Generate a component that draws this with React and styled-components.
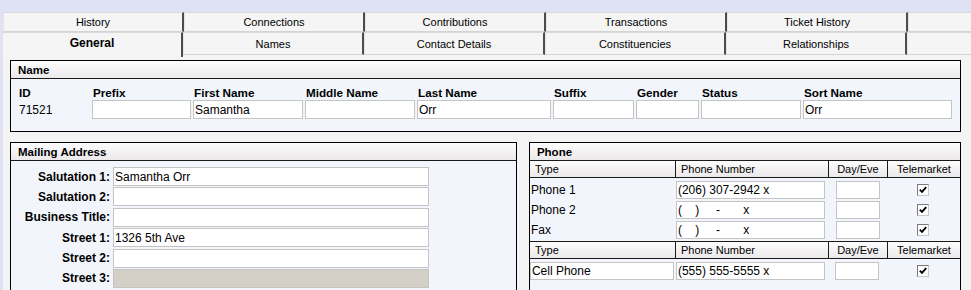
import React from "react";
import styled, { createGlobalStyle } from "styled-components";

const GlobalStyle = createGlobalStyle`
  html, body {
    margin: 0;
    padding: 0;
    background: #dee2f4;
    font-family: "Liberation Sans", Arial, sans-serif;
    font-size: 11px;
    color: #000;
  }
`;

const topTabs = ["History", "Connections", "Contributions", "Transactions", "Ticket History"];
const bottomTabs = ["General", "Names", "Contact Details", "Constituencies", "Relationships"];

const nameFields = [
    { label: "ID", width: 74, value: "71521", plain: true },
    { label: "Prefix", width: 101, value: "" },
    { label: "First Name", width: 112, value: "Samantha" },
    { label: "Middle Name", width: 112, value: "" },
    { label: "Last Name", width: 136, value: "Orr" },
    { label: "Suffix", width: 83, value: "" },
    { label: "Gender", width: 65, value: "" },
    { label: "Status", width: 102, value: "" },
    { label: "Sort Name", width: 151, value: "Orr" },
];

const addressRows = [
    { label: "Salutation 1:", value: "Samantha Orr" },
    { label: "Salutation 2:", value: "" },
    { label: "Business Title:", value: "" },
    { label: "Street 1:", value: "1326 5th Ave" },
    { label: "Street 2:", value: "" },
    { label: "Street 3:", value: "", disabled: true },
];

const sp = (n) => "\u00a0".repeat(n);
const blankNumber = "(" + sp(4) + ")" + sp(5) + "-" + sp(7) + "x";

const phoneRows = [
    { type: "Phone 1", number: "(206) 307-2942 x" },
    { type: "Phone 2", number: blankNumber },
    { type: "Fax", number: blankNumber },
];

const CheckBox = () => (
    <Check>
        <svg width="8" height="8" viewBox="0 0 8 8">
            <path d="M0.8 3.6 L3 5.8 L7.2 1.2" fill="none" stroke="#000" strokeWidth="1.9" />
        </svg>
    </Check>
);

const PhoneHeader = () => (
    <PhoneGrid $head>
        <HeadCell>Type</HeadCell>
        <HeadCell>Phone Number</HeadCell>
        <HeadCell $center>Day/Eve</HeadCell>
        <HeadCell $center $last>Telemarket</HeadCell>
    </PhoneGrid>
);

const App = () => {
    return (
        <>
            <GlobalStyle />
            <Page>
                <TabRow $top>
                    {topTabs.map((t) => (
                        <Tab key={t}>{t}</Tab>
                    ))}
                    <Tab $filler />
                </TabRow>
                <TabRow>
                    {bottomTabs.map((t, i) => (
                        <Tab key={t} $active={i === 0}>
                            {t}
                        </Tab>
                    ))}
                    <Tab $filler />
                </TabRow>
                <Content>
                    <Panel>
                        <PanelHeader>Name</PanelHeader>
                        <NameBody>
                            {nameFields.map((f) => (
                                <NameCol key={f.label} style={{ width: f.width }}>
                                    <FieldLabel>{f.label}</FieldLabel>
                                    {f.plain ? <PlainValue>{f.value}</PlainValue> : <Input>{f.value}</Input>}
                                </NameCol>
                            ))}
                        </NameBody>
                    </Panel>
                    <Columns>
                        <Panel $width={508}>
                            <PanelHeader>Mailing Address</PanelHeader>
                            <AddressBody>
                                {addressRows.map((r) => (
                                    <AddressRow key={r.label}>
                                        <RowLabel>{r.label}</RowLabel>
                                        <Input $w={316} $h={19} $disabled={r.disabled}>
                                            {r.value}
                                        </Input>
                                    </AddressRow>
                                ))}
                            </AddressBody>
                        </Panel>
                        <Panel $width={433}>
                            <PanelHeader>Phone</PanelHeader>
                            <PhoneHeader />
                            <PhoneRows>
                                {phoneRows.map((r) => (
                                    <PhoneGrid key={r.type}>
                                        <TypeText>{r.type}</TypeText>
                                        <Input $w={149} $h={18}>{r.number}</Input>
                                        <DayEve />
                                        <CheckCell>
                                            <CheckBox />
                                        </CheckCell>
                                    </PhoneGrid>
                                ))}
                            </PhoneRows>
                            <PhoneHeader />
                            <PhoneRows $last>
                                <PhoneGrid>
                                    <Input $w={144} $h={18}>Cell Phone</Input>
                                    <Input $w={149} $h={18}>(555) 555-5555 x</Input>
                                    <DayEve $shift />
                                    <CheckCell>
                                        <CheckBox />
                                    </CheckCell>
                                </PhoneGrid>
                            </PhoneRows>
                        </Panel>
                    </Columns>
                </Content>
            </Page>
        </>
    );
};

export default App;

const Page = styled.div`
    width: 971px;
    height: 290px;
    overflow: hidden;
    padding-top: 12px;
    box-sizing: border-box;
    background: #dee2f4;
`;

const TabRow = styled.div`
    display: flex;
    height: ${(p) => (p.$top ? "20px" : "23px")};
    padding-left: ${(p) => (p.$top ? "3px" : "2px")};
    background: #dee2f4;
`;

const Tab = styled.div`
    flex: ${(p) => (p.$filler ? "1" : "0 0 181px")};
    box-sizing: border-box;
    display: flex;
    align-items: center;
    justify-content: center;
    background: #f5f5f5;
    border-top: 1px solid #d9d9d9;
    border-bottom: ${(p) => (p.$active ? "none" : "1px solid #d4d4d4")};
    border-right: ${(p) => (p.$filler ? "none" : "2px solid #4d4d4d")};
    border-left: 1px solid #e4e4e4;
    font-weight: ${(p) => (p.$active ? "bold" : "normal")};
    font-size: ${(p) => (p.$active ? "12px" : "11px")};
    padding-bottom: ${(p) => (p.$active ? "4px" : "0")};
    ${(p) => (p.$active ? "height: 25px;" : "")}
`;

const Content = styled.div`
    margin-left: 3px;
    background: #f4f4f4;
    height: 300px;
    padding: 5px 10px 0 7px;
    box-sizing: border-box;
`;

const Panel = styled.div`
    border: 1px solid #000;
    width: ${(p) => (p.$width ? p.$width + "px" : "auto")};
    box-sizing: border-box;
    background: #f2f6fc;
    display: flex;
    flex-direction: column;
    ${(p) => (p.$width ? "height: 160px;" : "")}
`;

const PanelHeader = styled.div`
    height: 18px;
    box-sizing: border-box;
    padding: 3px 7px 0;
    font-weight: bold;
    font-size: 11.5px;
    background: linear-gradient(#fdfdfd, #ebe8ea);
    border-bottom: 1px solid #1a1a1a;
`;

const NameBody = styled.div`
    display: flex;
    padding: 7px 0 12px 7px;
`;

const NameCol = styled.div`
    display: flex;
    flex-direction: column;
    flex: none;
`;

const FieldLabel = styled.div`
    font-weight: bold;
    font-size: 11.7px;
    height: 13px;
    padding-left: 1px;
    margin-bottom: 1px;
    white-space: nowrap;
`;

const PlainValue = styled.div`
    height: 19px;
    display: flex;
    align-items: center;
    padding-left: 1px;
    font-size: 12px;
`;

const Input = styled.div`
    box-sizing: border-box;
    width: ${(p) => (p.$w ? p.$w + "px" : "calc(100% - 2px)")};
    height: ${(p) => (p.$h || 19) + "px"};
    border: 1px solid #c4c4c4;
    background: ${(p) => (p.$disabled ? "#d4d0c8" : "#fff")};
    padding-left: 1px;
    display: flex;
    align-items: center;
    font-size: 12px;
    white-space: pre;
    flex: none;
`;

const Columns = styled.div`
    display: flex;
    gap: 12px;
    margin-top: 10px;
`;

const AddressBody = styled.div`
    display: flex;
    flex-direction: column;
    gap: 1.4px;
    padding-top: 6px;
`;

const AddressRow = styled.div`
    display: flex;
    align-items: center;
    gap: 3px;
`;

const RowLabel = styled.div`
    width: 99px;
    text-align: right;
    font-weight: bold;
    font-size: 12px;
    white-space: nowrap;
`;

const PhoneGrid = styled.div`
    display: grid;
    grid-template-columns: 146px 153px 59px 1fr;
    align-items: ${(p) => (p.$head ? "center" : "start")};
    height: ${(p) => (p.$head ? "17px" : "20px")};
    box-sizing: border-box;
    ${(p) =>
        p.$head
            ? `background: linear-gradient(#fdfdfd, #ebe8ea);
               border-bottom: 1px solid #1a1a1a;`
            : ""}
`;

const HeadCell = styled.div`
    height: 100%;
    box-sizing: border-box;
    display: flex;
    align-items: center;
    justify-content: ${(p) => (p.$center ? "center" : "flex-start")};
    padding-left: ${(p) => (p.$center ? "0" : "5px")};
    border-right: ${(p) => (p.$last ? "none" : "1px solid #1a1a1a")};
`;

const PhoneRows = styled.div`
    display: flex;
    flex-direction: column;
    padding-top: 3px;
    border-bottom: ${(p) => (p.$last ? "none" : "1px solid #1a1a1a")};
`;

const TypeText = styled.div`
    height: 18px;
    display: flex;
    align-items: center;
    padding-left: 1px;
    font-size: 12px;
`;

const DayEve = styled.div`
    width: 44px;
    height: 18px;
    box-sizing: border-box;
    border: 1px solid #c4c4c4;
    background: #fff;
    margin-left: ${(p) => (p.$shift ? "6px" : "7px")};
`;

const CheckCell = styled.div`
    height: 18px;
    display: flex;
    align-items: center;
    justify-content: center;
    padding-right: 2px;
`;

const Check = styled.span`
    width: 12px;
    height: 12px;
    box-sizing: border-box;
    border: 1px solid #7a7a7a;
    border-right-color: #c8c8c8;
    border-bottom-color: #c8c8c8;
    background: #fff;
    display: flex;
    align-items: center;
    justify-content: center;
`;
